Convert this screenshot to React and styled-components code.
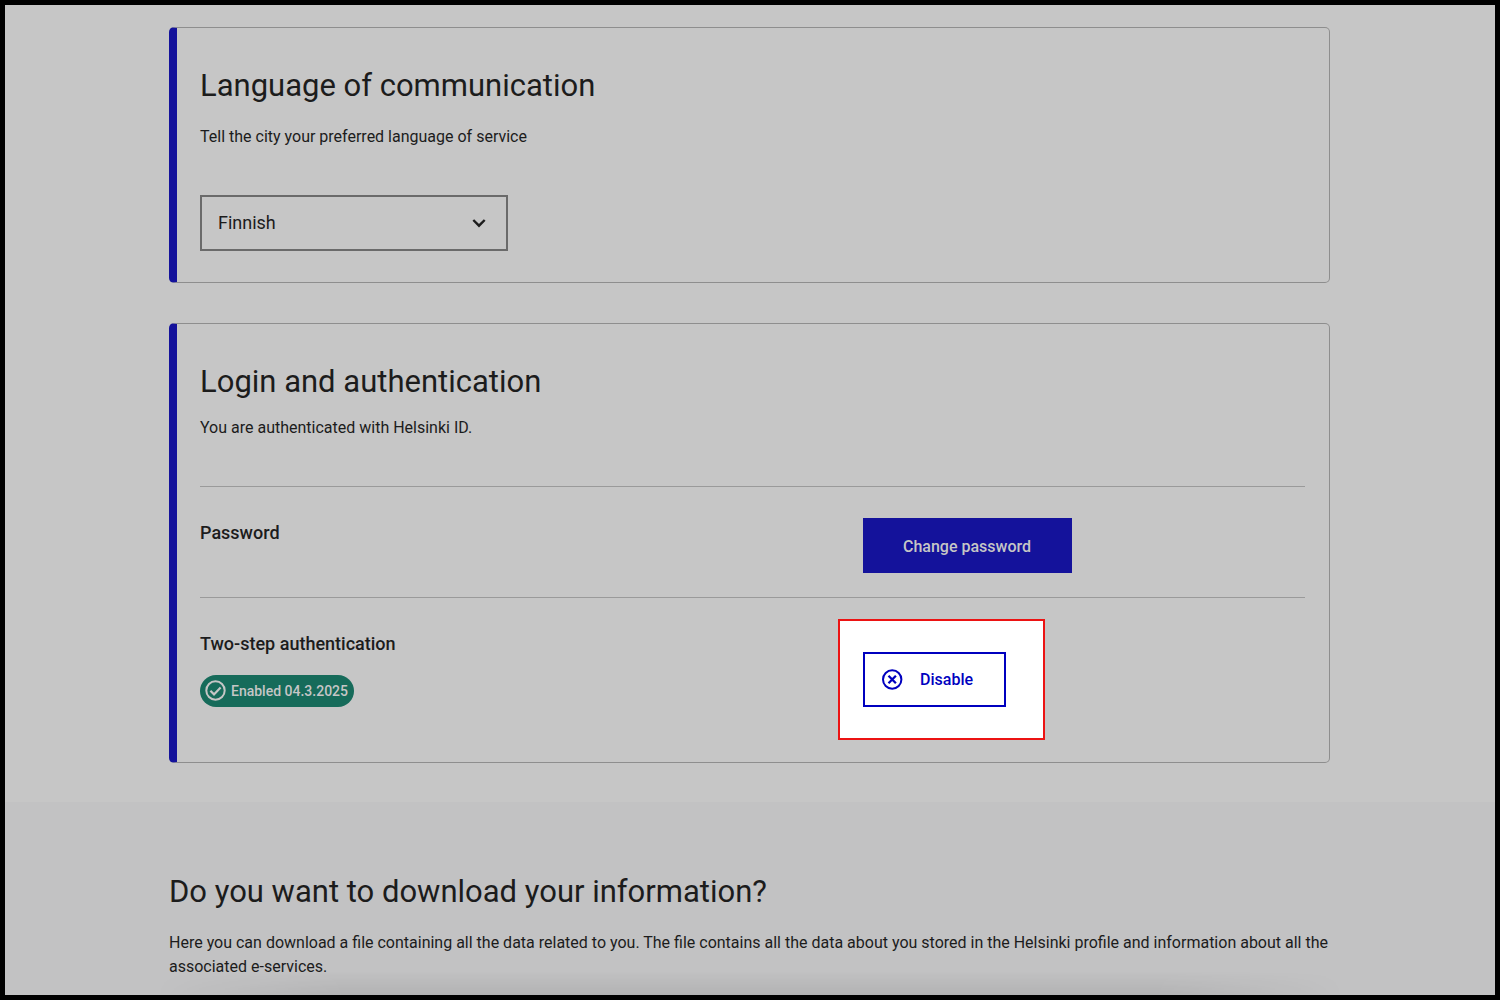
import React from "react";
import styled, { createGlobalStyle } from "styled-components";

const ink = "#1c1c1c";
const blue = "#14129b";
const blueBright = "#0000bf";
const surface = "#c6c6c6";
const line = "#9a9a9a";

const GlobalStyle = createGlobalStyle`
  *, *::before, *::after { box-sizing: border-box; }
  body {
    margin: 0;
    background: #000;
    color: ${ink};
    font-family: Roboto, "Liberation Sans", sans-serif;
    font-size: 16px;
    line-height: 24px;
  }
  h2, h3, p { margin: 0; }
`;

const Page = styled.div`
  position: relative;
  display: flex;
  flex-direction: column;
  min-height: 100vh;
  border: 5px solid #000;
  background: ${surface};
`;

const Main = styled.main`
  display: flex;
  flex-direction: column;
  gap: 40px;
  padding: 22px 165px 39px 164px;
`;

const Card = styled.section`
  padding: 37px 24px ${(p) => p.$bottom}px 23px;
  border: 1px solid #8e8e8e;
  border-left: 8px solid ${blue};
  border-radius: 5px;
`;

const Heading = styled.h2`
  font-size: 31px;
  line-height: 42px;
  font-weight: 400;
`;

const Text = styled.p`
  margin-top: ${(p) => p.$gap}px;
`;

const SelectBox = styled.label`
  display: grid;
  align-items: center;
  width: 308px;
  margin-top: 46px;

  > * { grid-area: 1 / 1; }
  > svg {
    justify-self: end;
    margin-right: 17px;
    pointer-events: none;
  }
`;

const Select = styled.select`
  appearance: none;
  width: 100%;
  height: 56px;
  padding: 0 48px 0 16px;
  border: 2px solid #6a6a6a;
  border-radius: 0;
  background: transparent;
  color: ${ink};
  font: inherit;
  font-size: 18px;
`;

const Row = styled.div`
  display: grid;
  grid-template-columns: 3fr 2fr;
  align-items: start;
  margin-top: ${(p) => p.$gap}px;
  padding-top: 31px;
  border-top: 1px solid ${line};
`;

const RowLabel = styled.div`
  display: flex;
  flex-direction: column;
  align-items: flex-start;
  gap: 16px;
`;

const RowTitle = styled.h3`
  font-size: 18px;
  line-height: 30px;
  font-weight: 500;
`;

const Badge = styled.span`
  display: inline-flex;
  align-items: center;
  gap: 4px;
  height: 32px;
  padding: 0 6px 0 3px;
  border-radius: 16px;
  background: #166b5a;
  color: ${surface};
  font-size: 14px;
  font-weight: 500;
`;

const Button = styled.button`
  display: inline-flex;
  align-items: center;
  height: 55px;
  border: 2px solid ${(p) => (p.$outlined ? blueBright : blue)};
  border-radius: 0;
  padding: ${(p) => (p.$outlined ? "0 31px 0 15px" : "2px 39px 0 38px")};
  gap: 16px;
  background: ${(p) => (p.$outlined ? "#fff" : blue)};
  color: ${(p) => (p.$outlined ? blueBright : surface)};
  font: inherit;
  font-weight: 500;
`;

const Spotlight = styled.div`
  position: relative;
  z-index: 0;
  justify-self: start;
  display: flex;
  margin-top: 23px;

  &::before {
    content: "";
    position: absolute;
    z-index: -1;
    inset: -33px -39px -33px -25px;
    border: 2px solid #ec1313;
    background: #fff;
  }
`;

const Download = styled.section`
  position: relative;
  flex: 1;
  padding: 69px 165px 15px 164px;
  background: #c2c2c3;
`;

const Shade = styled.div`
  position: absolute;
  inset: auto 150px 0;
  height: 24px;
  background: linear-gradient(transparent, rgba(0, 0, 0, 0.08));
  mask-image: linear-gradient(90deg, transparent, #000 16%, #000 84%, transparent);
`;

const Chevron = () => (
  <svg width="24" height="24" viewBox="0 0 24 24" fill="none" stroke={ink} strokeWidth="2.4" aria-hidden="true">
    <path d="M6.3 9l5.7 5.7L17.7 9" />
  </svg>
);

const CheckCircle = () => (
  <svg width="24" height="24" viewBox="0 0 24 24" fill="none" stroke="currentColor" strokeWidth="2" aria-hidden="true">
    <circle cx="12.5" cy="11.5" r="9.2" />
    <path d="M7.4 11.8l3.6 3.6 6.6-6.9" strokeWidth="2.2" />
  </svg>
);

const CrossCircle = () => (
  <svg width="24" height="24" viewBox="0 0 24 24" fill="none" stroke="currentColor" strokeWidth="2" aria-hidden="true">
    <circle cx="12.2" cy="11.5" r="9.2" />
    <path d="M8.5 7.8l7.4 7.4M15.9 7.8l-7.4 7.4" strokeWidth="2.3" />
  </svg>
);

export default function App() {
  return (
    <>
      <GlobalStyle />
      <Page>
        <Main>
          <Card $bottom={31}>
            <Heading>Language of communication</Heading>
            <Text $gap={18} id="language-hint">Tell the city your preferred language of service</Text>
            <SelectBox>
              <Select aria-labelledby="language-hint" defaultValue="fi">
                <option value="fi">Finnish</option>
              </Select>
              <Chevron />
            </SelectBox>
          </Card>

          <Card $bottom={55}>
            <Heading>Login and authentication</Heading>
            <Text $gap={13}>You are authenticated with Helsinki ID.</Text>
            <Row $gap={46}>
              <RowTitle>Password</RowTitle>
              <div>
                <Button type="button">Change password</Button>
              </div>
            </Row>
            <Row $gap={24}>
              <RowLabel>
                <RowTitle>Two-step authentication</RowTitle>
                <Badge>
                  <CheckCircle />
                  Enabled 04.3.2025
                </Badge>
              </RowLabel>
              <Spotlight>
                <Button type="button" $outlined>
                  <CrossCircle />
                  Disable
                </Button>
              </Spotlight>
            </Row>
          </Card>
        </Main>

        <Download>
          <Heading>Do you want to download your information?</Heading>
          <Text $gap={18}>
            Here you can download a file containing all the data related to you. The file contains all the data about
            you stored in the Helsinki profile and information about all the associated e-services.
          </Text>
          <Shade />
        </Download>
      </Page>
    </>
  );
}
